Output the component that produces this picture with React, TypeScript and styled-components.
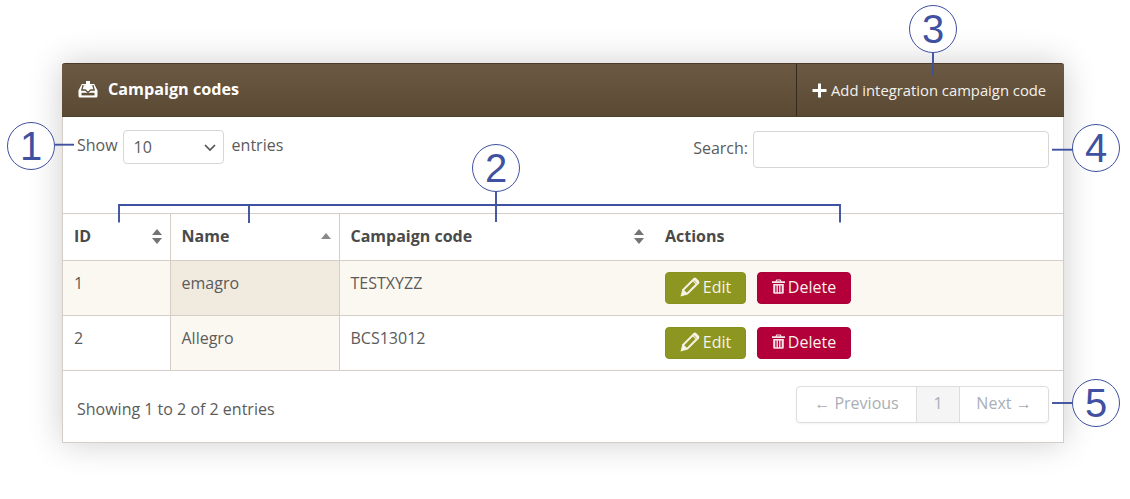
import React from 'react';
import styled, { createGlobalStyle } from 'styled-components';

const Global = createGlobalStyle`
  html, body { margin: 0; padding: 0; background: #fff; }
  body { font-family: "Open Sans", "Liberation Sans", sans-serif; font-size: 16px; color: #5b5b5b; }
  * { box-sizing: border-box; }
`;

const Stage = styled.div`
  position: relative;
  width: 1130px;
  height: 499px;
  padding: 63px 66px 56px 62px;
  overflow: hidden;
`;

const Panel = styled.section`
  width: 1002px;
  height: 380px;
  background: #fff;
  border: 1px solid #d5cdc6;
  border-top: 0;
  border-radius: 3px 3px 0 0;
  box-shadow: 0 0 34px rgba(0, 0, 0, 0.2);
  display: flex;
  flex-direction: column;
`;

const Header = styled.header`
  height: 54px;
  margin: 0 -1px;
  display: flex;
  justify-content: space-between;
  background: linear-gradient(#6b5943, #5a4933);
  border-top: 1px solid #4b3b29;
  border-bottom: 1px solid #4f3f2c;
  border-radius: 3px 3px 0 0;
  color: #fff;
`;

const Title = styled.h2`
  margin: 0;
  padding-left: 16px;
  display: flex;
  align-items: center;
  gap: 10px;
  font-size: 16.2px;
  font-weight: 700;
  padding-bottom: 2px;
`;

const AddButton = styled.button`
  width: 268px;
  padding: 0 0 0 15px;
  display: flex;
  align-items: center;
  gap: 4px;
  border: 0;
  border-left: 1px solid #35291b;
  background: transparent;
  color: #f4f1ec;
  font: 400 14.8px "Open Sans", sans-serif;
  white-space: nowrap;
`;

const Controls = styled.div`
  height: 96px;
  display: flex;
  justify-content: space-between;
  align-items: flex-start;
  padding: 13px 14px 0 14px;
`;

const Length = styled.label`
  display: flex;
  align-items: center;
  height: 34px;
  padding-bottom: 5px;
`;

const SelectBox = styled.div`
  width: 101px;
  height: 34px;
  margin: 5px 8px 0 5px;
  padding: 0 6px 0 10px;
  display: flex;
  align-items: center;
  justify-content: space-between;
  border: 1px solid #d6d6d6;
  border-radius: 4px;
  background: #fff;
  color: #5b5b5b;
`;

const SearchLabel = styled.label`
  display: flex;
  align-items: flex-start;
  gap: 5px;
  line-height: 36px;
`;

const SearchInput = styled.input`
  width: 296px;
  height: 37px;
  margin-top: 1px;
  border: 1px solid #d6d6d6;
  border-radius: 4px;
  background: #fff;
  outline: none;
`;

const Table = styled.table`
  width: 1000px;
  table-layout: fixed;
  border-collapse: collapse;
  border-top: 1px solid #d5cdc6;
`;

const Th = styled.th`
  height: 47px;
  padding: 0 11px;
  text-align: left;
  font-size: 16px;
  font-weight: 700;
  color: #4a4a4a;
  border-left: ${p => (p.$ruled ? '1px solid #d5cdc6' : '0')};
  padding-bottom: 2px;
`;

const HeadInner = styled.div`
  display: flex;
  justify-content: space-between;
  align-items: center;
  margin-right: ${p => -p.$shift}px;
`;

const Row = styled.tr`
  height: 55px;
  background: ${p => (p.$odd ? '#fbf8f2' : '#fff')};
  border-top: 1px solid #d5cdc6;
  border-bottom: 1px solid #d5cdc6;
`;

const Td = styled.td`
  padding: 0 11px 10px 11px;
  font-size: 16px;
  color: #5b5b5b;
  border-left: ${p => (p.$ruled ? '1px solid #d5cdc6' : '0')};
  background: ${p => p.$bg || 'transparent'};
`;

const ActionCell = styled.td`
  padding: 0 11px;
`;

const Actions = styled.div`
  display: flex;
  gap: 11px;
`;

const ActionButton = styled.button`
  height: 32px;
  width: ${p => p.$w}px;
  display: flex;
  align-items: center;
  justify-content: center;
  gap: 3px;
  padding: 0 0 3px;
  border: 1px solid ${p => p.$border};
  border-radius: 4px;
  background: ${p => p.$bg};
  color: #f6f3e6;
  font: 400 16px "Open Sans", sans-serif;
`;

const Footer = styled.footer`
  flex: 1;
  display: flex;
  justify-content: space-between;
  padding: 15px 14px 0;
`;

const Info = styled.div`
  padding-top: 13px;
  font-size: 16px;
  line-height: 20px;
`;

const Pager = styled.nav`
  height: 37px;
  display: flex;
  border: 1px solid #ddd;
  border-radius: 4px;
  box-shadow: 0 1px 2px rgba(0, 0, 0, 0.05);
  color: #a9aeb5;
  font-size: 16px;
`;

const PageItem = styled.span`
  width: ${p => p.$w}px;
  display: flex;
  align-items: center;
  justify-content: center;
  padding-bottom: 4px;
  background: ${p => (p.$active ? '#f5f5f5' : 'transparent')};
  border-left: ${p => (p.$ruled ? '1px solid #ddd' : '0')};
`;

const Callout = styled.div`
  position: absolute;
  left: ${p => p.$x - 24}px;
  top: ${p => p.$y - 24}px;
  width: 48px;
  height: 48px;
  border: 1.6px solid #3f51a0;
  border-radius: 50%;
  background: #fff;
  color: #3f51a0;
  font: 400 40px/47px "Liberation Sans", Arial, sans-serif;
  text-align: center;
`;

const Leaders = styled.svg`
  position: absolute;
  left: 0;
  top: 0;
  pointer-events: none;
`;

const SortIcon = () => (
  <svg width="10" height="16" viewBox="0 0 10 16">
    <path d="M5 1 L10 7 H0Z" fill="#747474" />
    <path d="M0 10 H10 L5 16Z" fill="#747474" />
  </svg>
);

const SortAscIcon = () => (
  <svg width="10" height="16" viewBox="0 0 10 16">
    <path d="M5 5 L10 11 H0Z" fill="#8a8a8a" />
  </svg>
);

const InboxIcon = () => (
  <svg width="20" height="17" viewBox="0 0 20 17">
    <path d="M.5 9.5 L3.8 3 H16.2 L19.5 9.5 V15 Q19.5 16.5 18 16.5 H2 Q.5 16.5 .5 15Z" fill="#fff" />
    <path d="M6.4 4.6 H5 L3.8 9 H7.4 L10 11.4 L12.6 9 H16.2 L15 4.6 H13.6" fill="none" stroke="#60503a" strokeWidth="1.3" />
    <path d="M8 0 H12 V4.5 H15 L10 9.5 L5 4.5 H8Z" fill="#fff" />
    <rect x="3.5" y="11.8" width="13" height="2.6" fill="#60503a" />
  </svg>
);

const PlusIcon = () => (
  <svg width="15" height="15" viewBox="0 0 15 15">
    <path d="M6 .5 H9 V6 H14.5 V9 H9 V14.5 H6 V9 H.5 V6 H6Z" fill="#fff" />
  </svg>
);

const PencilIcon = () => (
  <svg width="20" height="20" viewBox="0 0 20 20" fill="none">
    <path d="M.5 19.5 L2.4 12.2 L13.6 1 Q14.8 .2 16 1 L19 4 Q19.8 5.2 19 6.4 L7.8 17.6 Z" fill="#f6f3e6" />
    <path d="M4.2 13.2 L12.9 4.5 L15.5 7.1 L6.8 15.8 Z" fill="#8c9620" />
    <path d="M13.9 3.5 L16.5 6.1" stroke="#8c9620" strokeWidth=".8" />
  </svg>
);

const TrashIcon = () => (
  <svg width="13" height="15" viewBox="0 0 13 15">
    <path fillRule="evenodd" d="M4.4 .5 H8.6 L9.6 2.3 H13 V4 H0 V2.3 H3.4Z M5 1.5 L4.7 2.3 H8.3 L8 1.5Z" fill="#f6e4ea" />
    <path fillRule="evenodd" d="M1.2 5 H11.8 V13.4 Q11.8 14.8 10.4 14.8 H2.6 Q1.2 14.8 1.2 13.4Z M3.3 6.5 V13.2 H4.5 V6.5Z M5.9 6.5 V13.2 H7.1 V6.5Z M8.5 6.5 V13.2 H9.7 V6.5Z" fill="#f6e4ea" />
  </svg>
);

const Chevron = () => (
  <svg width="14" height="9" viewBox="0 0 14 9" fill="none">
    <path d="M2 2 L7 7 L12 2" stroke="#555" strokeWidth="1.7" />
  </svg>
);

const rows = [
  { id: 1, name: 'emagro', code: 'TESTXYZZ' },
  { id: 2, name: 'Allegro', code: 'BCS13012' },
];

export default function App() {
  return (
    <Stage>
      <Global />
      <Panel>
        <Header>
          <Title><InboxIcon />Campaign codes</Title>
          <AddButton><PlusIcon />Add integration campaign code</AddButton>
        </Header>
        <Controls>
          <Length>
            Show
            <SelectBox>10<Chevron /></SelectBox>
            entries
          </Length>
          <SearchLabel>
            Search:
            <SearchInput aria-label="Search" />
          </SearchLabel>
        </Controls>
        <Table>
          <colgroup>
            <col style={{ width: 107 }} />
            <col style={{ width: 169 }} />
            <col style={{ width: 315 }} />
            <col />
          </colgroup>
          <thead>
            <tr>
              <Th><HeadInner $shift={3}>ID<SortIcon /></HeadInner></Th>
              <Th $ruled><HeadInner $shift={3}>Name<SortAscIcon /></HeadInner></Th>
              <Th $ruled><HeadInner $shift={1}>Campaign code<SortIcon /></HeadInner></Th>
              <Th>Actions</Th>
            </tr>
          </thead>
          <tbody>
            {rows.map((r, i) => (
              <Row key={r.id} $odd={i === 0}>
                <Td>{r.id}</Td>
                <Td $ruled $bg={i === 0 ? '#f0eadf' : '#fbf8f2'}>{r.name}</Td>
                <Td $ruled>{r.code}</Td>
                <ActionCell>
                  <Actions>
                    <ActionButton $w={81} $bg="#8c9620" $border="#87911e"><PencilIcon />Edit</ActionButton>
                    <ActionButton $w={94} $bg="#b3003b" $border="#ab0038"><TrashIcon />Delete</ActionButton>
                  </Actions>
                </ActionCell>
              </Row>
            ))}
          </tbody>
        </Table>
        <Footer>
          <Info>Showing 1 to 2 of 2 entries</Info>
          <Pager>
            <PageItem $w={119}>← Previous</PageItem>
            <PageItem $w={43} $ruled $active>1</PageItem>
            <PageItem $w={89} $ruled>Next →</PageItem>
          </Pager>
        </Footer>
      </Panel>
      <Leaders width="1130" height="499" fill="none" stroke="#3f51a0" strokeWidth="1.9">
        <path d="M55 144.7 H74" />
        <path d="M119 222.5 V205 H840 V222.5" />
        <path d="M249 205 V223" />
        <path d="M496 190 V222" />
        <path d="M933 52 V75" />
        <path d="M1052 149.7 H1074" />
        <path d="M1052 403 H1074" />
      </Leaders>
      <Callout $x={31} $y={146}>1</Callout>
      <Callout $x={496} $y={168}>2</Callout>
      <Callout $x={933} $y={29}>3</Callout>
      <Callout $x={1096} $y={148}>4</Callout>
      <Callout $x={1096} $y={403}>5</Callout>
    </Stage>
  );
}
